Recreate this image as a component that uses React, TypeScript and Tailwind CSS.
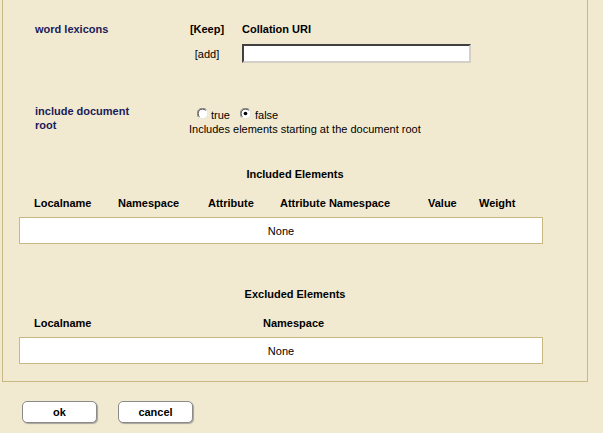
import React from 'react'

const font = { fontFamily: '"Liberation Sans", Arial, sans-serif' }

function Radio({ checked }: { checked?: boolean }) {
  return (
    <svg width="11" height="11" viewBox="0 0 12 12" className="shrink-0">
      <circle cx="6" cy="6" r="5.5" fill="#ffffff" />
      <path d="M1.8 10.2 A5.5 5.5 0 0 1 10.2 1.8" fill="none" stroke="#7a7a7a" strokeWidth="1" />
      <path d="M2.6 9.4 A4.4 4.4 0 0 1 9.4 2.6" fill="none" stroke="#303030" strokeWidth="1" />
      <path d="M10.2 1.8 A5.5 5.5 0 0 1 1.8 10.2" fill="none" stroke="#e2e2e2" strokeWidth="1" />
      {checked && <circle cx="6" cy="6" r="2" fill="#000000" />}
    </svg>
  )
}

function ElementTable({ title, columns }: { title: string; columns: [string, number][] }) {
  return (
    <div>
      <div className="text-center font-bold leading-[14px] text-black">{title}</div>
      <div className="mt-[15px] flex pl-[31px] font-bold leading-[14px] text-black">
        {columns.map(([name, width]) => (
          <div key={name} className="shrink-0" style={{ width }}>
            {name}
          </div>
        ))}
      </div>
      <div className="ml-[16px] mt-[7px] flex h-[27px] w-[524px] items-center justify-center border border-[#c8b982] bg-white leading-[14px] text-black">
        None
      </div>
    </div>
  )
}

function Button({ label }: { label: string }) {
  return (
    <button
      type="button"
      className="h-[22px] w-[75px] rounded-[5px] border border-[#8a8a8a] bg-white text-[11px] font-bold text-black shadow-[1px_1px_1px_#a8a39a]"
      style={font}
    >
      {label}
    </button>
  )
}

export default function App() {
  return (
    <div className="h-[433px] w-[603px] overflow-hidden bg-[#f2ead0] text-[11px]" style={font}>
      <div className="ml-[2px] w-[586px] border-x border-b border-[#c8b982] pb-[17px] pt-[22px]">
        <div className="flex pl-[32px]">
          <div className="w-[154px] shrink-0 font-bold leading-[14px] text-[#1a1a5a]">word lexicons</div>
          <div>
            <div className="flex leading-[14px] font-bold text-black">
              <div className="w-[36px] text-center">[Keep]</div>
              <div className="ml-[17px]">Collation URI</div>
            </div>
            <div className="mt-[8px] flex items-center">
              <div className="w-[36px] text-center leading-[14px] text-black">[add]</div>
              <input
                type="text"
                className="ml-[17px] h-[19px] w-[229px] border-2 border-b-[#d4d0c8] border-l-[#404040] border-r-[#d4d0c8] border-t-[#404040] bg-white outline-none"
              />
            </div>
          </div>
        </div>

        <div className="mt-[41px] flex pl-[32px]">
          <div className="w-[154px] shrink-0 pr-[40px] font-bold leading-[14px] text-[#1a1a5a]">
            include document root
          </div>
          <div className="pt-[4px] leading-[14px] text-black">
            <div className="flex items-start pl-[8px]">
              <Radio />
              <span className="ml-[3px]">true</span>
              <span className="ml-[10px]">
                <Radio checked />
              </span>
              <span className="ml-[4px]">false</span>
            </div>
            <div>Includes elements starting at the document root</div>
          </div>
        </div>

        <div className="mt-[31px]">
          <ElementTable
            title="Included Elements"
            columns={[
              ['Localname', 84],
              ['Namespace', 90],
              ['Attribute', 72],
              ['Attribute Namespace', 148],
              ['Value', 51],
              ['Weight', 60],
            ]}
          />
        </div>

        <div className="mt-[43px]">
          <ElementTable
            title="Excluded Elements"
            columns={[
              ['Localname', 229],
              ['Namespace', 100],
            ]}
          />
        </div>
      </div>

      <div className="ml-[22px] mt-[19px] flex gap-[21px]">
        <Button label="ok" />
        <Button label="cancel" />
      </div>
    </div>
  )
}
